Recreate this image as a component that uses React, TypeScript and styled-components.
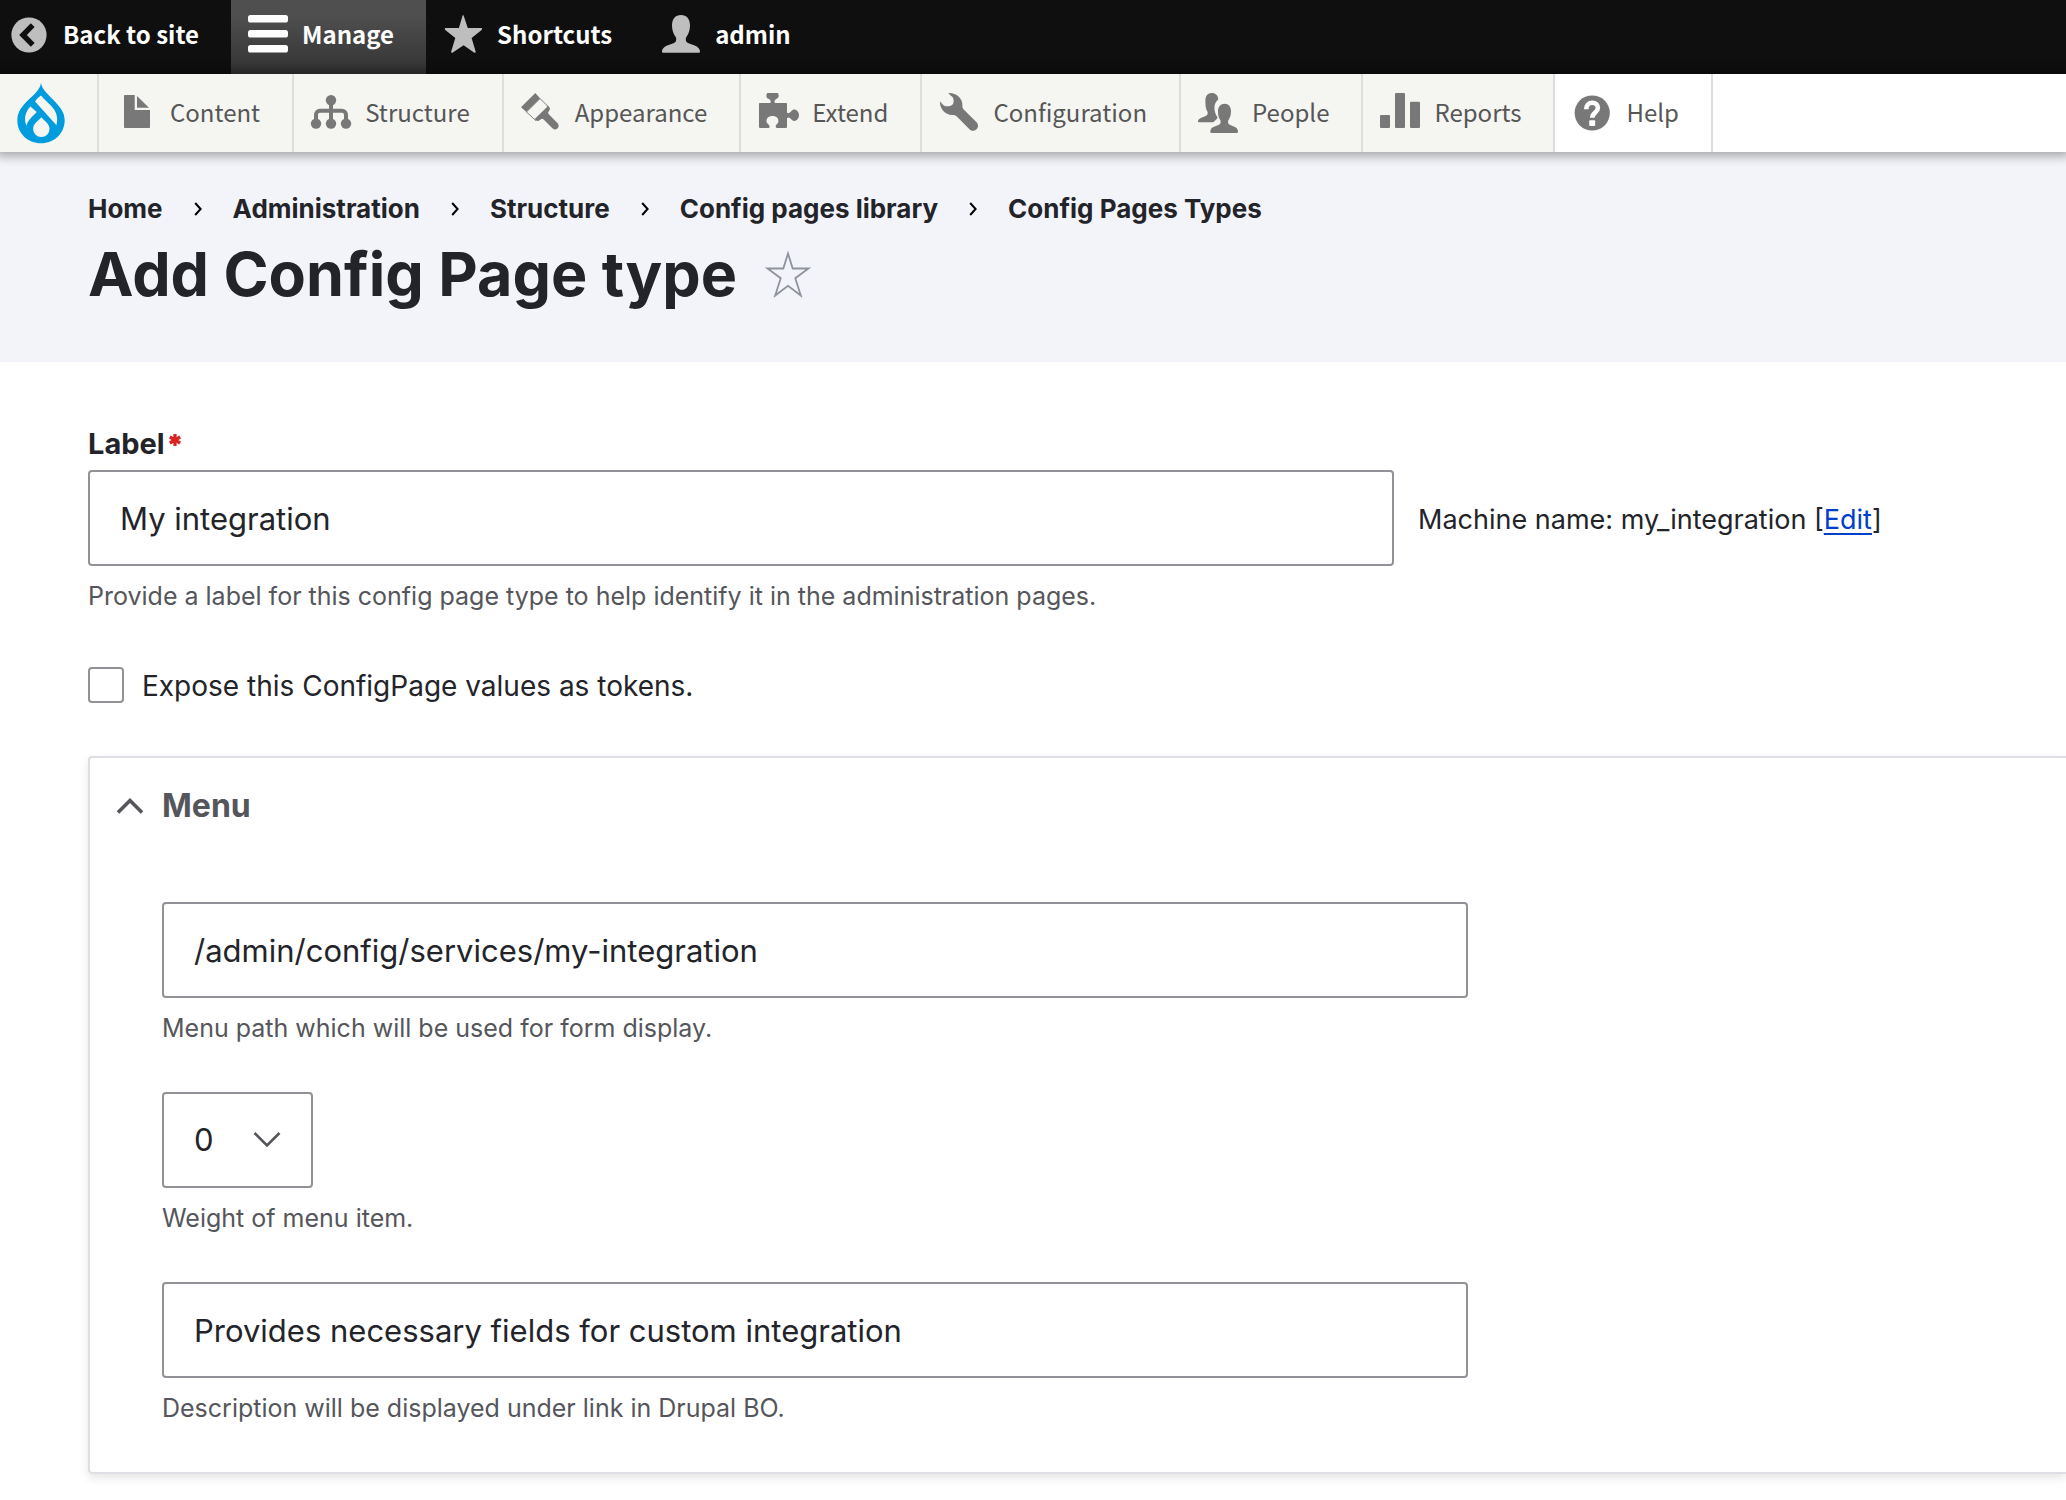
import React from 'react';
import styled, { createGlobalStyle } from 'styled-components';

const toolbarFont = '"Source Sans Pro", "Noto Sans CJK SC", "Noto Sans", sans-serif';
const bodyFont = 'Inter, "Liberation Sans", sans-serif';
const ink = '#232429';
const muted = '#55565b';
const outline = '#919297';

const GlobalStyle = createGlobalStyle`
  *, *::before, *::after { box-sizing: border-box; }
  body {
    margin: 0;
    overflow-x: hidden;
    background: #fff;
    color: ${ink};
    font-family: ${bodyFont};
  }
`;

/* Administration toolbar */

const Bar = styled.nav`
  display: flex;
  height: 74px;
  background: #0f0f0f;
`;

const BarLink = styled.a<{ $active?: boolean; $first?: boolean }>`
  display: flex;
  align-items: center;
  gap: 14px;
  padding: 0 32px 4px ${(p) => (p.$first ? 9 : 17)}px;
  color: #fff;
  background: ${(p) => (p.$active ? 'linear-gradient(#4f4f4f 20%, #333)' : 'none')};
  font: 700 24px/40px ${toolbarFont};
  text-decoration: none;
  white-space: nowrap;
`;

const Tray = styled.nav`
  position: relative;
  display: flex;
  height: 78px;
  background: #fff;
  box-shadow: 0 0 10px 4px rgba(0, 0, 0, 0.33);
`;

const TrayLink = styled.a<{ $plain?: boolean }>`
  display: flex;
  align-items: center;
  gap: 14px;
  padding: 0 32px 0 17px;
  border-right: 2px solid #ddd;
  background: ${(p) => (p.$plain ? '#fff' : '#f5f5f2')};
  color: #565656;
  font: 400 24px/40px ${toolbarFont};
  text-decoration: none;
  white-space: nowrap;
`;

const ToolbarLabel = styled.span`
  padding-bottom: 3px;
`;

const Icon = styled.svg`
  flex: none;
  width: 40px;
  height: 40px;
  overflow: visible;
`;

const LogoMark = styled.svg`
  flex: none;
  width: 48px;
  height: 62px;
`;

/* Page header */

const Header = styled.header`
  padding: 41px 88px 52px;
  background: #f3f4f9;
`;

const Breadcrumb = styled.ol`
  display: flex;
  align-items: center;
  gap: 31px;
  margin: 0;
  padding: 0;
  list-style: none;
  font: 700 26px/32px ${bodyFont};
`;

const Crumb = styled.li`
  display: flex;
  align-items: center;
  gap: 31px;
`;

const CrumbLink = styled.a`
  color: ${ink};
  text-decoration: none;
`;

const CrumbArrow = styled.svg`
  width: 8px;
  height: 14px;
`;

const TitleRow = styled.div`
  display: flex;
  align-items: center;
  gap: 27px;
  margin-top: 13px;
`;

const Title = styled.h1`
  margin: 0;
  font: 700 61px/72px ${bodyFont};
`;

const StarButton = styled.button`
  display: flex;
  padding: 0;
  border: 0;
  background: none;
`;

const StarOutline = styled.svg`
  width: 48px;
  height: 48px;
`;

/* Form */

const Form = styled.form`
  padding: 64px 0 24px 88px;
`;

const Field = styled.div`
  margin-bottom: 46px;
`;

const FieldLabel = styled.label`
  display: flex;
  gap: 4px;
  margin-bottom: 8px;
  font: 700 29px/36px ${bodyFont};
`;

const RequiredMark = styled.svg`
  width: 12px;
  height: 12px;
  margin-top: 8px;
`;

const InputRow = styled.div`
  display: flex;
  align-items: center;
  gap: 24px;
`;

const TextInput = styled.input`
  display: block;
  width: 100%;
  max-width: 1306px;
  height: 96px;
  padding: 0 30px;
  border: 2px solid ${outline};
  border-radius: 4px;
  background: #fff;
  color: ${ink};
  font: 400 31px/48px ${bodyFont};
`;

const MachineName = styled.span`
  padding-top: 4px;
  font: 400 27px/40px ${bodyFont};
  white-space: nowrap;
`;

const EditLink = styled.a`
  color: #003ecc;
  text-decoration: underline;
  text-decoration-thickness: 2px;
  text-underline-offset: 4px;
`;

const Description = styled.p`
  margin: 12px 0 0;
  color: ${muted};
  font: 400 25px/36px ${bodyFont};
`;

const CheckRow = styled.div`
  display: flex;
  align-items: center;
  gap: 18px;
  margin: 52px 0 52px;
`;

const Checkbox = styled.input`
  appearance: none;
  width: 36px;
  height: 36px;
  margin: 0;
  border: 2px solid ${outline};
  border-radius: 4px;
  background: #fff;
`;

const CheckLabel = styled.label`
  padding-top: 2px;
  font: 400 28px/36px ${bodyFont};
`;

const Card = styled.details`
  padding: 28px 0 0 72px;
  border: 2px solid #dedfe4;
  border-right: 0;
  border-radius: 4px 0 0 4px;
  box-shadow: 0 4px 10px rgba(0, 0, 0, 0.1);
`;

const CardSummary = styled.summary`
  display: flex;
  align-items: center;
  gap: 18px;
  margin: 0 0 76px -46px;
  color: ${muted};
  font: 700 32px/40px ${bodyFont};
  list-style: none;

  &::-webkit-details-marker { display: none; }
`;

const SummaryArrow = styled.svg`
  width: 28px;
  height: 18px;
`;

const SelectBox = styled.div`
  position: relative;
  width: 151px;
`;

const Select = styled.select`
  appearance: none;
  display: block;
  width: 100%;
  height: 96px;
  padding: 0 30px;
  border: 2px solid ${outline};
  border-radius: 4px;
  background: #fff;
  color: ${ink};
  font: 400 31px/48px ${bodyFont};
`;

const SelectArrow = styled.svg`
  position: absolute;
  top: 39px;
  right: 32px;
  width: 28px;
  height: 17px;
  pointer-events: none;
`;

const BackIcon = () => (
  <Icon viewBox="0 0 40 40" aria-hidden="true">
    <circle cx="20" cy="20" r="17.6" fill="#bebebe" />
    <path d="M23.7 10.2 14 20l9.7 9.8" fill="none" stroke="#0f0f0f" strokeWidth="5.4" />
  </Icon>
);

const MenuIcon = () => (
  <Icon viewBox="0 0 40 40" fill="#fff" aria-hidden="true">
    <rect x="0" y="0" width="40" height="7.6" rx="2.6" />
    <rect x="0" y="15" width="40" height="7.6" rx="2.6" />
    <rect x="0" y="30" width="40" height="7.6" rx="2.6" />
  </Icon>
);

const StarIcon = () => (
  <Icon viewBox="0 0 40 40" fill="#bebebe" aria-hidden="true">
    <path d="M20.6.4 24.8 13h13.4c1.1 0 1.3 1.2.4 1.9l-10 8 4 13.500c.3 1.200-.7 1.700-1.600 1L20.600 30.300 9.800 37.400c-.9.700-1.900.2-1.600-1l4.100-13.500-10-8C1.400 14.200 1.600 13 2.700 13h13.200L19.600.5c.3-.8.800-.8 1-.1z" />
  </Icon>
);

const UserIcon = () => (
  <Icon viewBox="0 0 40 40" fill="#bebebe" aria-hidden="true">
    <path d="M20 0c5.600 0 9 4 9 10.500 0 4.500-1.400 8.500-3.500 11.200-1.300 1.800-.8 4.800.6 5.800C29.500 29.800 39 30.500 39 36.500c0 .8-.5 1.300-1.300 1.300H2.300C1.500 37.800 1 37.300 1 36.500c0-6 9.500-6.700 12.900-9 1.400-1 1.900-4 .6-5.800C12.400 19 11 15 11 10.500 11 4 14.400 0 20 0z" />
  </Icon>
);

const FileIcon = () => (
  <Icon viewBox="0 0 40 40" fill="#787878" aria-hidden="true">
    <path d="M8.800 2H18.700v15H34v17.200a.8.800 0 0 1-.8.800H8.800a.8.800 0 0 1-.8-.8V2.800a.8.800 0 0 1 .8-.8z" />
    <path d="M21 3v11.700h12z" />
  </Icon>
);

const StructureIcon = () => (
  <Icon viewBox="0 0 40 40" fill="#787878" aria-hidden="true">
    <path d="M20 7v25M5 32V21.800a4 4 0 0 1 4-4h22a4 4 0 0 1 4 4V32" fill="none" stroke="#787878" strokeWidth="4" />
    <circle cx="20" cy="7.300" r="5.200" />
    <circle cx="5" cy="30.600" r="5.200" />
    <circle cx="20" cy="30.600" r="5.200" />
    <circle cx="35" cy="30.600" r="5.200" />
  </Icon>
);

const BrushIcon = () => (
  <Icon viewBox="0 0 40 40" fill="#787878" aria-hidden="true">
    <path d="M14.300 0 19.200 5.400 5.400 19 0 14.300z" />
    <path d="M19 5.600 28 14.400 15 27.600 5.500 19z" fill="#f5f5f2" stroke="#787878" strokeWidth="1" />
    <path d="M26.300 12.500 28.700 15c.6.600.3 1.500-.9 3.300-.9 1.400-.8 2.200 0 3l8.600 8.700c3.600 3.700-1.300 8.700-5 5.200l-8.800-8.800c-.9-.9-1.800-.8-3 .1-1.600 1.300-2.800 1.900-3.600 1.200L12.800 25.500z" />
    <path d="M19 6.500 26.300 13.700 13.700 26 6.500 19z" fill="#f5f5f2" />
  </Icon>
);

const PuzzleIcon = () => (
  <Icon viewBox="0 0 40 40" fill="#787878" aria-hidden="true">
    <path d="M1.500 10H12.200c1.300-1.700.5-3-2.200-4.400C7.900 4.400 8 1.500 9.300 0h10.400c1.500 1.500 1.400 4.400-.7 5.600-2.500 1.400-3.200 2.700-2 4.400H28c.6 0 1 .4 1 1v8.500c1.500 1.600 3 .3 4.200-1.200 2.800-3.800 7.800-.8 7.800 4s-5 7.700-7.800 4c-1.200-1.600-2.700-2.700-4.200-1V34a1 1 0 0 1-1 1H18.500c-1.700-2-.5-3 1-4.500 1.900-2 1.200-7.500-5-7.500s-7 5.500-5 7.500c1.500 1.500 3 2.500 1.500 4.500H2a1 1 0 0 1-1-1V10.500z" />
  </Icon>
);

const WrenchIcon = () => (
  <Icon viewBox="0 0 40 40" fill="#787878" aria-hidden="true">
    <path d="M9.400 0c7.600-.5 14 5 14 11.600 0 2.300-.2 3.300 1.300 4.800L37.600 29.300c4.500 4.800-2.300 11.500-7.100 7L17.800 23.600c-1.300-1.300-2.600-1.300-4.600-1.500C5.700 21.500.6 15.800 1 8.500c1 .6 1.700 2 3 3.300 1.500 1.500 3.500 1.700 5.600 1.400 3.400-.4 4.900-1.800 5-4.700.1-2.600-.3-3.600-2-5.200C11.300 2 9.900 1 9.400 0z" />
  </Icon>
);

const PeopleIcon = () => (
  <Icon viewBox="0 0 40 40" fill="#787878" aria-hidden="true">
    <path d="M13.700 0c4 0 6.500 2.500 6.500 6.500-3 2.300-4.300 6-3.600 10.500.4 3 1.700 5.800 3 7.500-.4 2-2.500 2.600-4.400 4.800H.6C.2 29.300 0 29 0 28.600c0-3.800 6-4.200 8.500-6 1.400-1 1.600-3.400.6-4.600C7.800 16 7.400 12.800 7.400 7.800 7.400 3 9.700 0 13.700 0z" />
    <path d="M26.700 10.800c4 0 6.300 2.900 6.300 7.700 0 3.300-.9 6-2.200 7.900-1.200 1.600-.9 4 .4 5C33.700 33 40 33.500 40 38.500c0 .9-.4 1.500-1.300 1.500H13.600c-.9 0-1.300-.6-1.300-1.500 0-5 6.600-5.500 9.200-7.100 1.300-1 1.600-3.400.4-5-1.300-1.900-1.900-4.600-1.900-7.900 0-4.800 2.700-7.700 6.700-7.700z" />
  </Icon>
);

const ReportsIcon = () => (
  <Icon viewBox="0 0 40 40" fill="#787878" aria-hidden="true">
    <rect x="0" y="22" width="10" height="13" rx="1" />
    <rect x="15" y="0" width="10" height="35" rx="1" />
    <rect x="30" y="8.700" width="10" height="26.300" rx="1" />
  </Icon>
);

const HelpIcon = () => (
  <Icon viewBox="0 0 40 40" aria-hidden="true">
    <circle cx="20.200" cy="20" r="17.600" fill="#787878" />
    <path d="M14.300 16.200c0-4 2.300-6.400 6-6.400s5.600 2.200 5.600 5.200c0 4.600-5.600 4.600-5.600 9.800" fill="none" stroke="#fff" strokeWidth="4.600" />
    <rect x="17.200" y="27.300" width="6" height="5.700" rx="1" fill="#fff" />
  </Icon>
);

const Logo = () => (
  <LogoMark viewBox="50 254 146 184" aria-hidden="true">
    <path
      fill="#009cde"
      fillRule="evenodd"
      d="M123 255C127 278 148 292 168 314C184 332 195 346 195 368C195 408 163 438 123 438C83 438 51 408 51 368C51 340 68 324 82 309C101 290 119 278 123 255zM123 293C116 297 110 304 105 311L170 383C174 368 173 352 164 337C153 320 134 308 123 293zM91 326C75 342 70 364 79 385C83 366 99 356 110 343zM124 359C116 370 99 377 99 395a25 24 0 0 0 50 0C149 377 132 370 124 359z"
    />
  </LogoMark>
);

const trayItems: { label: string; icon: React.ReactNode; plain?: boolean }[] = [
  { label: 'Content', icon: <FileIcon /> },
  { label: 'Structure', icon: <StructureIcon /> },
  { label: 'Appearance', icon: <BrushIcon /> },
  { label: 'Extend', icon: <PuzzleIcon /> },
  { label: 'Configuration', icon: <WrenchIcon /> },
  { label: 'People', icon: <PeopleIcon /> },
  { label: 'Reports', icon: <ReportsIcon /> },
  { label: 'Help', icon: <HelpIcon />, plain: true },
];

const crumbs = ['Home', 'Administration', 'Structure', 'Config pages library', 'Config Pages Types'];

export default function App() {
  return (
    <>
      <GlobalStyle />
      <Bar aria-label="Toolbar items">
        <BarLink href="#" $first><BackIcon /><ToolbarLabel>Back to site</ToolbarLabel></BarLink>
        <BarLink href="#" $active><MenuIcon /><ToolbarLabel>Manage</ToolbarLabel></BarLink>
        <BarLink href="#"><StarIcon /><ToolbarLabel>Shortcuts</ToolbarLabel></BarLink>
        <BarLink href="#"><UserIcon /><ToolbarLabel>admin</ToolbarLabel></BarLink>
      </Bar>
      <Tray aria-label="Administration menu">
        <TrayLink href="#" aria-label="Drupal"><Logo /></TrayLink>
        {trayItems.map((item) => (
          <TrayLink key={item.label} href="#" $plain={item.plain}>
            {item.icon}
            <ToolbarLabel>{item.label}</ToolbarLabel>
          </TrayLink>
        ))}
      </Tray>
      <Header>
        <nav aria-label="Breadcrumb">
          <Breadcrumb>
            {crumbs.map((name, i) => (
              <Crumb key={name}>
                {i > 0 && (
                  <CrumbArrow viewBox="0 0 8 14" aria-hidden="true">
                    <path d="M1.200 1 6.600 7l-5.400 6" fill="none" stroke="#000" strokeWidth="2" />
                  </CrumbArrow>
                )}
                <CrumbLink href="#">{name}</CrumbLink>
              </Crumb>
            ))}
          </Breadcrumb>
        </nav>
        <TitleRow>
          <Title>Add Config Page type</Title>
          <StarButton type="button" aria-label="Add to shortcuts">
            <StarOutline viewBox="0 0 48 48" aria-hidden="true">
              <path
                d="M24 3.500 28.700 18.500H44.500L31.300 28.200 36.800 45.500 24 35.800 11.200 45.500 16.700 28.200 3.500 18.500H19.300z"
                fill="none"
                stroke="#8e929c"
                strokeWidth="1.800"
              />
            </StarOutline>
          </StarButton>
        </TitleRow>
      </Header>
      <Form>
        <FieldLabel htmlFor="label">
          Label
          <RequiredMark viewBox="0 0 12 12" aria-hidden="true">
            <path d="M6 0v12M.8 3l10.400 6M.8 9l10.400-6" stroke="#dc2323" strokeWidth="3.200" />
          </RequiredMark>
        </FieldLabel>
        <InputRow>
          <TextInput id="label" type="text" defaultValue="My integration" required />
          <MachineName>
            Machine name: my_integration [<EditLink href="#">Edit</EditLink>]
          </MachineName>
        </InputRow>
        <Description>
          Provide a label for this config page type to help identify it in the administration pages.
        </Description>
        <CheckRow>
          <Checkbox id="expose" type="checkbox" />
          <CheckLabel htmlFor="expose">Expose this ConfigPage values as tokens.</CheckLabel>
        </CheckRow>
        <Card open>
          <CardSummary>
            <SummaryArrow viewBox="0 0 28 18" aria-hidden="true">
              <path d="M2 15.500 14 3.500l12 12" fill="none" stroke={muted} strokeWidth="3.600" />
            </SummaryArrow>
            Menu
          </CardSummary>
          <Field>
            <TextInput aria-label="Menu path" type="text" defaultValue="/admin/config/services/my-integration" />
            <Description>Menu path which will be used for form display.</Description>
          </Field>
          <Field>
            <SelectBox>
              <Select aria-label="Weight" defaultValue="0">
                <option value="0">0</option>
                <option value="1">1</option>
              </Select>
              <SelectArrow viewBox="0 0 28 17" aria-hidden="true">
                <path d="M1.500 2 14 14.500 26.500 2" fill="none" stroke={muted} strokeWidth="2.600" />
              </SelectArrow>
            </SelectBox>
            <Description>Weight of menu item.</Description>
          </Field>
          <Field>
            <TextInput aria-label="Menu description" type="text" defaultValue="Provides necessary fields for custom integration" />
            <Description>Description will be displayed under link in Drupal BO.</Description>
          </Field>
        </Card>
      </Form>
    </>
  );
}
